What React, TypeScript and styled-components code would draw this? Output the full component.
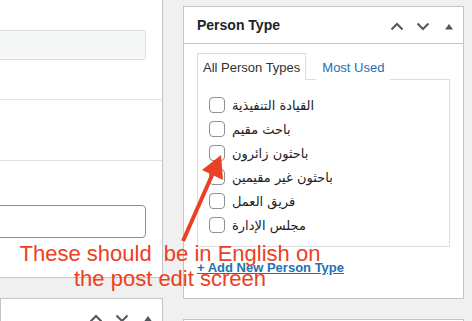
import React from 'react';
import styled, { createGlobalStyle } from 'styled-components';

const personTypes = [
  'القيادة التنفيذية',
  'باحث مقيم',
  'باحثون زائرون',
  'باحثون غير مقيمين',
  'فريق العمل',
  'مجلس الإدارة',
];

export default function App() {
  return (
    <>
      <GlobalStyle />
      <Screen>
        <LeftColumn>
          <EditPanel>
            <ReadonlyField />
            <Divider />
            <Section />
            <Divider />
            <TextField />
          </EditPanel>
          <Panel>
            <PanelHeader>
              <span />
              <HandleActions />
            </PanelHeader>
          </Panel>
        </LeftColumn>

        <RightColumn>
          <Panel>
            <PanelHeader>
              <Title>Person Type</Title>
              <HandleActions />
            </PanelHeader>
            <PanelBody>
              <Tabs>
                <Tab active>All Person Types</Tab>
                <Tab>Most Used</Tab>
              </Tabs>
              <TabPanel>
                {personTypes.map((name) => (
                  <CheckRow key={name}>
                    <Checkbox />
                    <Label>{name}</Label>
                  </CheckRow>
                ))}
              </TabPanel>
              <AddLink href="#">+ Add New Person Type</AddLink>
            </PanelBody>
          </Panel>
          <Panel />
        </RightColumn>

        <Annotation>
          <Note>{'These should  be in English on\nthe post edit screen'}</Note>
          <Arrow width="472" height="321" viewBox="0 0 472 321">
            <line x1="183" y1="241" x2="213" y2="173" stroke="#ea4124" strokeWidth="4" />
            <polygon points="221,155 202,170 223,180" fill="#ea4124" />
          </Arrow>
        </Annotation>
      </Screen>
    </>
  );
}

function HandleActions() {
  return (
    <Actions>
      <svg width="14" height="9" viewBox="0 0 14 9">
        <path d="M1.5 7.5 L7 2 L12.5 7.5" fill="none" stroke="#50575e" strokeWidth="2" />
      </svg>
      <svg width="14" height="9" viewBox="0 0 14 9">
        <path d="M1.5 1.5 L7 7 L12.5 1.5" fill="none" stroke="#50575e" strokeWidth="2" />
      </svg>
      <Toggle width="10" height="7" viewBox="0 0 10 7">
        <path d="M1 6.5 L5 1 L9 6.5 Z" fill="#50575e" />
      </Toggle>
    </Actions>
  );
}

const GlobalStyle = createGlobalStyle`
  html, body {
    margin: 0;
    padding: 0;
    background: #f0f0f1;
    font-family: "Liberation Sans", Arial, sans-serif;
  }
`;

const Screen = styled.div`
  position: relative;
  width: 472px;
  height: 321px;
  overflow: hidden;
  display: flex;
  align-items: flex-start;
  background: #f0f0f1;
`;

const LeftColumn = styled.div`
  width: 163px;
  display: flex;
  flex-direction: column;
  gap: 20px;
`;

const EditPanel = styled.div`
  height: 278px;
  box-sizing: border-box;
  background: #fff;
  border-right: 1px solid #c3c4c7;
  border-bottom: 1px solid #c3c4c7;
  padding-top: 30px;
  overflow: hidden;
`;

const ReadonlyField = styled.div`
  height: 30px;
  box-sizing: border-box;
  margin: 0 16px 39px -10px;
  background: #f6f7f7;
  border: 1px solid #dcdcde;
  border-radius: 3px;
`;

const Divider = styled.div`
  height: 1px;
  background: #e2e3e5;
`;

const Section = styled.div`
  height: 60px;
`;

const TextField = styled.div`
  height: 33px;
  box-sizing: border-box;
  margin: 44px 16px 0 -10px;
  background: #fff;
  border: 1px solid #8c8f94;
  border-radius: 4px;
`;

const RightColumn = styled.div`
  width: 281px;
  margin-left: 20px;
  padding-top: 6px;
  display: flex;
  flex-direction: column;
  gap: 20px;
`;

const Panel = styled.div`
  background: #fff;
  border: 1px solid #c3c4c7;
  min-height: 40px;
`;

const PanelHeader = styled.div`
  height: 36px;
  display: flex;
  align-items: center;
  justify-content: space-between;
  padding: 0 9px 0 13px;
  border-bottom: 1px solid #c3c4c7;
`;

const Title = styled.h2`
  margin: 0;
  font-size: 14px;
  font-weight: 700;
  color: #1d2327;
`;

const Actions = styled.div`
  display: flex;
  align-items: center;
  gap: 12px;
  padding-top: 2px;
`;

const Toggle = styled.svg`
  margin-left: 2px;
`;

const PanelBody = styled.div`
  padding: 9px 13px 22px;
`;

const Tabs = styled.div`
  display: flex;
  align-items: flex-end;
  gap: 10px;
  margin-bottom: -1px;
`;

const Tab = styled.div<{ active?: boolean }>`
  height: 27px;
  box-sizing: border-box;
  padding: 0 5px;
  display: flex;
  align-items: center;
  font-size: 13px;
  color: ${(p) => (p.active ? '#2c3338' : '#2271b1')};
  background: #fff;
  border: 1px solid ${(p) => (p.active ? '#dcdcde' : 'transparent')};
  border-bottom: none;
  position: relative;
  z-index: 1;
`;

const TabPanel = styled.div`
  border: 1px solid #dcdcde;
  padding: 13px 12px 9px 11px;
`;

const CheckRow = styled.div`
  height: 24px;
  display: flex;
  align-items: center;
  gap: 7px;
`;

const Checkbox = styled.span`
  width: 16px;
  height: 16px;
  box-sizing: border-box;
  border: 1px solid #8c8f94;
  border-radius: 4px;
  background: #fff;
`;

const Label = styled.span`
  font-family: "DejaVu Sans", "Noto Sans", sans-serif;
  font-size: 13px;
  color: #1d2327;
`;

const AddLink = styled.a`
  display: inline-block;
  margin-top: 13px;
  font-size: 13px;
  font-weight: 700;
  color: #2271b1;
  text-decoration: underline;
`;

const Annotation = styled.div`
  position: absolute;
  inset: 0;
  pointer-events: none;
`;

const Note = styled.div`
  position: absolute;
  left: 0;
  top: 241px;
  width: 340px;
  text-align: center;
  white-space: pre;
  font-family: "Liberation Sans", Arial, sans-serif;
  font-size: 22px;
  line-height: 25px;
  color: #ea4124;
`;

const Arrow = styled.svg`
  position: absolute;
  left: 0;
  top: 0;
`;
